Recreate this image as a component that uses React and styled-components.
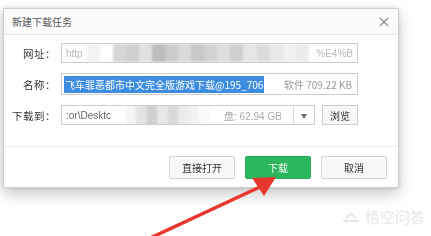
import React from "react";
import styled, { createGlobalStyle } from "styled-components";

const Global = createGlobalStyle`
  html, body { margin: 0; padding: 0; background: #fff; }
  body { font-family: "Noto Sans CJK SC", "Liberation Sans", sans-serif; }
`;

const Page = styled.div`
  position: relative;
  width: 431px;
  height: 236px;
  overflow: hidden;
  padding: 8px 0 0 3px;
  box-sizing: border-box;
  background: #fff;
`;

const Dialog = styled.div`
  width: 396px;
  height: 180px;
  box-sizing: border-box;
  border: 1px solid #cfcfcf;
  background: #fff;
  box-shadow: 0 6px 14px rgba(0, 0, 0, 0.22), 0 0 4px rgba(0, 0, 0, 0.12);
  display: flex;
  flex-direction: column;
  filter: blur(0.35px);
`;

const TitleBar = styled.div`
  height: 25px;
  flex: none;
  display: flex;
  align-items: center;
  justify-content: space-between;
  padding: 0 9px 0 8px;
  border-bottom: 1px solid #e3e3e3;
  background: #fbfbfb;
  font-size: 10px;
  color: #555;
`;

const Close = styled.svg`
  width: 10px;
  height: 10px;
  stroke: #8a8a8a;
  stroke-width: 1.2;
`;

const Body = styled.div`
  flex: 1;
  display: flex;
  flex-direction: column;
  gap: 10px;
  padding: 8px 40px 0 0;
`;

const Row = styled.div`
  display: flex;
  align-items: center;
  height: ${p => p.h || 20}px;
`;

const Label = styled.div`
  width: 57px;
  flex: none;
  text-align: right;
  font-size: 10.5px;
  color: #333;
  padding-right: 5px;
  box-sizing: border-box;
  letter-spacing: 0.5px;
`;

const Field = styled.div`
  flex: 1;
  height: 100%;
  box-sizing: border-box;
  border: 1px solid #cdcdcd;
  display: flex;
  align-items: center;
  overflow: hidden;
  font-size: 10px;
  color: #999;
  background: #fff;
`;

const Faint = styled.span`
  padding: 0 4px;
  color: ${p => p.c || "#b8b8b8"};
  white-space: nowrap;
  font-family: "Liberation Sans", "Noto Sans CJK SC", sans-serif;
`;

const Pixels = styled.div`
  display: flex;
  height: ${p => p.h || 100}%;
  width: ${p => p.w}px;
  filter: blur(1.2px);
  flex: none;
`;

const Px = styled.div`
  flex: 1;
  background: ${p => p.c};
`;

const Selected = styled.span`
  background: #3c8de0;
  color: #fff;
  padding: 1px 1px;
  margin-left: 2px;
  white-space: nowrap;
  font-size: 10px;
`;

const Size = styled.span`
  margin-left: auto;
  padding-right: 5px;
  color: #999;
  white-space: nowrap;
  font-size: 10px;
`;

const Dropdown = styled.div`
  width: 20px;
  height: 100%;
  margin-left: auto;
  border-left: 1px solid #d5d5d5;
  display: flex;
  align-items: center;
  justify-content: center;
  font-size: 6px;
  color: #666;
  flex: none;
`;

const SmallButton = styled.div`
  width: 36px;
  height: 100%;
  margin-left: 7px;
  box-sizing: border-box;
  border: 1px solid #cdcdcd;
  background: #f7f7f7;
  display: flex;
  align-items: center;
  justify-content: center;
  font-size: 10px;
  color: #333;
  flex: none;
`;

const Footer = styled.div`
  height: 41px;
  flex: none;
  border-top: 1px solid #ececec;
  display: flex;
  align-items: flex-start;
  justify-content: flex-end;
  gap: 10px;
  padding: 9px 11px 0 0;
  box-sizing: border-box;
`;

const Button = styled.div`
  width: 66px;
  height: 23px;
  box-sizing: border-box;
  border: 1px solid ${p => (p.primary ? "#27ad57" : "#d3d3d3")};
  background: ${p => (p.primary ? "#2bb55c" : "#f8f8f8")};
  color: ${p => (p.primary ? "#fff" : "#333")};
  border-radius: 2px;
  display: flex;
  align-items: center;
  justify-content: center;
  font-size: 10px;
`;

const Arrow = styled.svg`
  position: absolute;
  left: 0;
  top: 0;
  width: 431px;
  height: 236px;
  pointer-events: none;
`;

const Watermark = styled.div`
  position: absolute;
  right: 6px;
  bottom: 9px;
  display: flex;
  align-items: center;
  gap: 5px;
  font-size: 15px;
  color: #ececec;
  filter: blur(0.6px);
  text-shadow: 0 0 1px rgba(0, 0, 0, 0.12);
`;

const urlBlocks = ["#f2f2f2", "#fff", "#d6d6d6", "#cfcfcf", "#e0e0e0", "#bcbcbc", "#cbcbcb", "#d9d9d9", "#c8c8c8", "#d2d2d2", "#dedede", "#cfcfcf", "#e6e6e6", "#dcdcdc", "#e9e9e9", "#f0f0f0", "#ececec"];
const pathBlocks = ["#fff", "#f4f4f4", "#e2e2e2", "#d0d0d0", "#e6e6e6", "#d8d8d8", "#ececec", "#f1f1f1", "#fafafa", "#fff"];

export default function App() {
  return (
    <>
      <Global />
      <Page>
        <Dialog>
          <TitleBar>
            <span>新建下载任务</span>
            <Close viewBox="0 0 10 10"><path d="M1 1L9 9M9 1L1 9" /></Close>
          </TitleBar>
          <Body>
            <Row>
              <Label>网址：</Label>
              <Field>
                <Faint>http</Faint>
                <Pixels w={222}>
                  {urlBlocks.map((c, i) => <Px key={i} c={c} />)}
                </Pixels>
                <Faint style={{ marginLeft: "auto" }}>%E4%B</Faint>
              </Field>
            </Row>
            <Row h={22}>
              <Label>名称：</Label>
              <Field>
                <Selected>飞车罪恶都市中文完全版游戏下载@195_706</Selected>
                <Size>软件 709.22 KB</Size>
              </Field>
            </Row>
            <Row>
              <Label>下载到：</Label>
              <Field>
                <Faint c="#666">:or\Desktc</Faint>
                <Pixels w={105} h={130}>
                  {pathBlocks.map((c, i) => <Px key={i} c={c} />)}
                </Pixels>
                <Faint c="#aaa">盘: 62.94 GB</Faint>
                <Dropdown>▼</Dropdown>
              </Field>
              <SmallButton>浏览</SmallButton>
            </Row>
          </Body>
          <Footer>
            <Button>直接打开</Button>
            <Button primary>下载</Button>
            <Button>取消</Button>
          </Footer>
        </Dialog>
        <Arrow viewBox="0 0 431 236">
          <line x1="146" y1="240" x2="262" y2="186" stroke="#e8372c" strokeWidth="3.5" />
          <polygon points="276,177 252,178 264,196" fill="#e8372c" />
        </Arrow>
        <Watermark>
          <svg width="18" height="11" viewBox="0 0 18 11">
            <path d="M1 10h16M4 7.5l5-5 5 5" stroke="#e6e6e6" strokeWidth="1.8" fill="none" />
          </svg>
          <span>悟空问答</span>
        </Watermark>
      </Page>
    </>
  );
}
